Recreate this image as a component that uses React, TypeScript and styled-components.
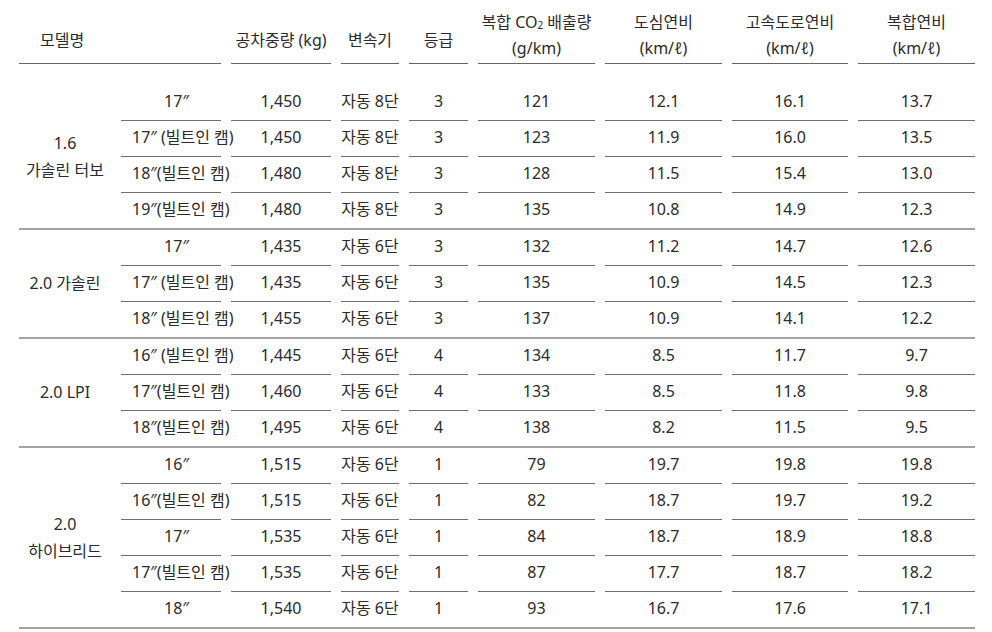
import React from 'react';
import styled, { createGlobalStyle } from 'styled-components';

interface Group {
  name: string[];
  trans: string;
  rows: string[][]; // size, weight, grade, co2, city, highway, combined
}

const groups: Group[] = [
  {
    name: ['1.6', '가솔린 터보'],
    trans: '자동 8단',
    rows: [
      ['17″', '1,450', '3', '121', '12.1', '16.1', '13.7'],
      ['17″ (빌트인 캠)', '1,450', '3', '123', '11.9', '16.0', '13.5'],
      ['18″(빌트인 캠)', '1,480', '3', '128', '11.5', '15.4', '13.0'],
      ['19″(빌트인 캠)', '1,480', '3', '135', '10.8', '14.9', '12.3'],
    ],
  },
  {
    name: ['2.0 가솔린'],
    trans: '자동 6단',
    rows: [
      ['17″', '1,435', '3', '132', '11.2', '14.7', '12.6'],
      ['17″ (빌트인 캠)', '1,435', '3', '135', '10.9', '14.5', '12.3'],
      ['18″ (빌트인 캠)', '1,455', '3', '137', '10.9', '14.1', '12.2'],
    ],
  },
  {
    name: ['2.0 LPI'],
    trans: '자동 6단',
    rows: [
      ['16″ (빌트인 캠)', '1,445', '4', '134', '8.5', '11.7', '9.7'],
      ['17″(빌트인 캠)', '1,460', '4', '133', '8.5', '11.8', '9.8'],
      ['18″(빌트인 캠)', '1,495', '4', '138', '8.2', '11.5', '9.5'],
    ],
  },
  {
    name: ['2.0', '하이브리드'],
    trans: '자동 6단',
    rows: [
      ['16″', '1,515', '1', '79', '19.7', '19.8', '19.8'],
      ['16″(빌트인 캠)', '1,515', '1', '82', '18.7', '19.7', '19.2'],
      ['17″', '1,535', '1', '84', '18.7', '18.9', '18.8'],
      ['17″(빌트인 캠)', '1,535', '1', '87', '17.7', '18.7', '18.2'],
      ['18″', '1,540', '1', '93', '16.7', '17.6', '17.1'],
    ],
  },
];

const colWidths = [92, 100, 100, 58, 59, 117, 117, 116, 117];

const GlobalStyle = createGlobalStyle`
  html, body {
    margin: 0;
    padding: 0;
    background: #fff;
  }
  body {
    font-family: "Noto Sans", "Noto Sans CJK KR", sans-serif;
    color: #2b2b2b;
  }
`;

const Wrapper = styled.div`
  padding: 9px 0 0 9px;
`;

const Table = styled.table`
  border-collapse: separate;
  border-spacing: 10px 0;
  table-layout: fixed;
  width: 976px;
  font-size: 16px;
`;

const Col = styled.col<{ $w: number }>`
  width: ${(p) => p.$w}px;
`;

const HeadCell = styled.th<{ $twoLine?: boolean; $left?: boolean }>`
  font-weight: 400;
  line-height: 26px;
  padding: 0 0 ${(p) => (p.$twoLine ? '2px' : '10px')} ${(p) => (p.$left ? '21px' : '0')};
  vertical-align: bottom;
  text-align: ${(p) => (p.$left ? 'left' : 'center')};
  border-bottom: 1px solid #666;
  white-space: nowrap;
`;

const Sub = styled.span`
  font-size: 0.62em;
  line-height: 0;
  vertical-align: -1px;
`;

const SpacerCell = styled.td`
  height: 21px;
  padding: 0;
`;

const Cell = styled.td<{ $last?: boolean; $shift?: number }>`
  height: 33px;
  padding: 0 0 2px ${(p) => p.$shift ?? 0}px;
  line-height: 33px;
  text-align: center;
  white-space: nowrap;
  border-bottom: ${(p) => (p.$last ? 'none' : '1px solid #707070')};
`;

const ModelCell = styled.td`
  padding: 0;
  line-height: 27px;
  text-align: center;
  vertical-align: middle;
  white-space: nowrap;
`;

const Divider = styled.td`
  height: 2px;
  padding: 0;
  background: #a3a3a3;
  font-size: 0;
  line-height: 0;
`;

const App = () => {
  return (
    <>
      <GlobalStyle />
      <Wrapper>
        <Table>
          <colgroup>
            {colWidths.map((w, i) => (
              <Col key={i} $w={w} />
            ))}
          </colgroup>
          <thead>
            <tr>
              <HeadCell colSpan={2} $left>
                모델명
              </HeadCell>
              <HeadCell>공차중량 (kg)</HeadCell>
              <HeadCell>변속기</HeadCell>
              <HeadCell>등급</HeadCell>
              <HeadCell $twoLine>
                복합 CO<Sub>2</Sub> 배출량
                <br />
                (g/km)
              </HeadCell>
              <HeadCell $twoLine>
                도심연비
                <br />
                (km/ℓ)
              </HeadCell>
              <HeadCell $twoLine>
                고속도로연비
                <br />
                (km/ℓ)
              </HeadCell>
              <HeadCell $twoLine>
                복합연비
                <br />
                (km/ℓ)
              </HeadCell>
            </tr>
          </thead>
          <tbody>
            <tr>
              <SpacerCell colSpan={9} />
            </tr>
            {groups.map((g, gi) => (
              <React.Fragment key={gi}>
                {g.rows.map((r, ri) => {
                  const last = ri === g.rows.length - 1;
                  return (
                    <tr key={ri}>
                      {ri === 0 && (
                        <ModelCell rowSpan={g.rows.length}>
                          {g.name.map((n, ni) => (
                            <div key={ni}>{n}</div>
                          ))}
                        </ModelCell>
                      )}
                      <Cell $last={last} $shift={11}>
                        {r[0]}
                      </Cell>
                      <Cell $last={last}>{r[1]}</Cell>
                      <Cell $last={last}>{g.trans}</Cell>
                      {r.slice(2).map((v, vi) => (
                        <Cell key={vi} $last={last}>
                          {v}
                        </Cell>
                      ))}
                    </tr>
                  );
                })}
                <tr>
                  <Divider colSpan={9} />
                </tr>
              </React.Fragment>
            ))}
          </tbody>
        </Table>
      </Wrapper>
    </>
  );
};

export default App;
